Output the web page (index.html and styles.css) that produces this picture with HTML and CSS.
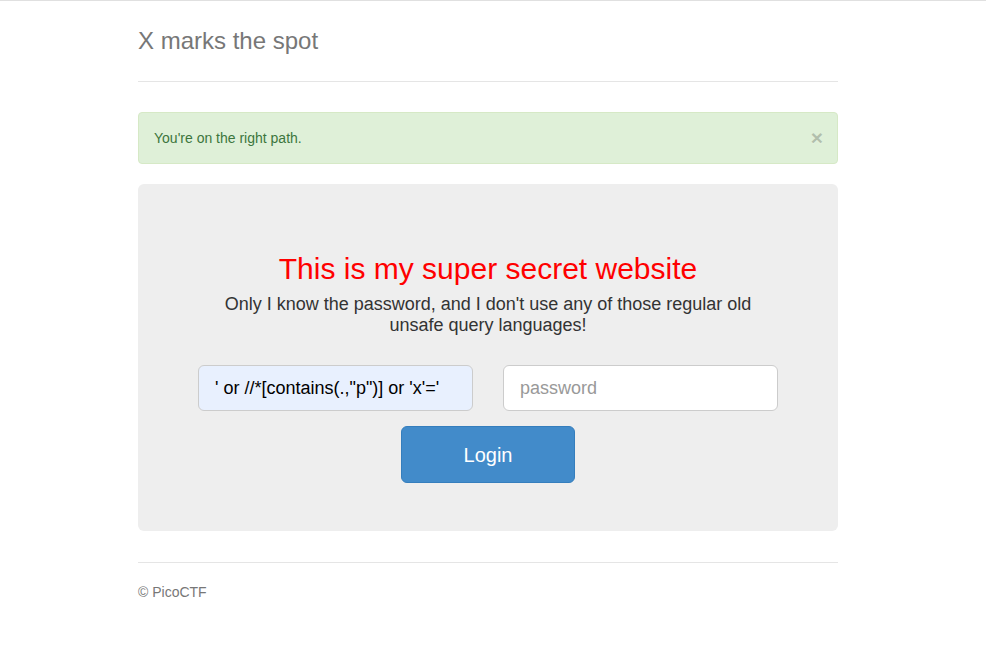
FILE: index.html
```html
<!DOCTYPE html>
<html>
<head>
<meta charset="utf-8">
<title>X marks the spot</title>
<link rel="stylesheet" href="styles.css">
</head>
<body>
<div class="container">
  <div class="header">
    <h3 class="brand">X marks the spot</h3>
  </div>
  <div class="alert">
    <span>You're on the right path.</span>
    <button class="close" type="button">&times;</button>
  </div>
  <div class="jumbotron">
    <h1 class="title">This is my super secret website</h1>
    <p class="lead">Only I know the password, and I don't use any of those regular old unsafe query languages!</p>
    <form class="login-form">
      <div class="fields">
        <input class="field field-filled" type="text" value="' or //*[contains(.,&quot;p&quot;)] or 'x'='">
        <input class="field" type="password" placeholder="password">
      </div>
      <button class="btn-login" type="button">Login</button>
    </form>
  </div>
  <div class="footer">
    <p>&copy; PicoCTF</p>
  </div>
</div>
</body>
</html>
```

FILE: styles.css
```css
html, body {
  margin: 0;
  padding: 0;
}
body {
  background: #fff;
  border-top: 1px solid #e0e0e0;
  font-family: "Liberation Sans", Arial, Helvetica, sans-serif;
  font-size: 14px;
  line-height: 20px;
  color: #333;
}
.container {
  width: 700px;
  margin-left: 138px;
  padding-top: 20px;
}
.header {
  padding-bottom: 20px;
  border-bottom: 1px solid #e5e5e5;
  margin-bottom: 30px;
}
.brand {
  margin: 0;
  font-size: 24px;
  font-weight: normal;
  line-height: 40px;
  color: #777;
}
.alert {
  display: flex;
  align-items: center;
  justify-content: space-between;
  padding: 15px 14px 15px 15px;
  border: 1px solid #d6e9c6;
  border-radius: 4px;
  background: #dff0d8;
  color: #3c763d;
  margin-bottom: 20px;
}
.close {
  border: 0;
  background: transparent;
  padding: 0;
  font-family: "Liberation Sans", Arial, sans-serif;
  font-size: 21px;
  font-weight: bold;
  line-height: 20px;
  color: #000;
  opacity: 0.2;
  text-shadow: 0 1px 0 #fff;
  cursor: pointer;
}
.jumbotron {
  background: #eeeeee;
  border-radius: 6px;
  padding: 48px 60px 48px;
  text-align: center;
  display: flex;
  flex-direction: column;
  align-items: center;
}
.title {
  margin: 19px 0 7px;
  font-size: 30px;
  font-weight: normal;
  line-height: 36px;
  color: #ff0000;
}
.lead {
  margin: 0;
  max-width: 560px;
  font-size: 18px;
  line-height: 21px;
  color: #333;
}
.login-form {
  margin-top: 29px;
  display: flex;
  flex-direction: column;
  align-items: center;
  gap: 15px;
}
.fields {
  display: flex;
  gap: 30px;
}
.field {
  box-sizing: border-box;
  width: 275px;
  height: 46px;
  padding: 10px 16px;
  border: 1px solid #ccc;
  border-radius: 6px;
  background: #fff;
  font-family: "Liberation Sans", Arial, sans-serif;
  font-size: 18px;
  color: #000;
  outline: none;
}
.field::placeholder {
  color: #999;
}
.field-filled {
  background: #e8f0fe;
}
.btn-login {
  box-sizing: border-box;
  width: 174px;
  height: 57px;
  padding-top: 2px;
  border: 1px solid #357ebd;
  border-radius: 6px;
  background: #428bca;
  color: #fff;
  font-family: "Liberation Sans", Arial, sans-serif;
  font-size: 20px;
  cursor: pointer;
}
.footer {
  margin-top: 31px;
  padding-top: 19px;
  border-top: 1px solid #e5e5e5;
  color: #777;
}
.footer p {
  margin: 0;
}
```
